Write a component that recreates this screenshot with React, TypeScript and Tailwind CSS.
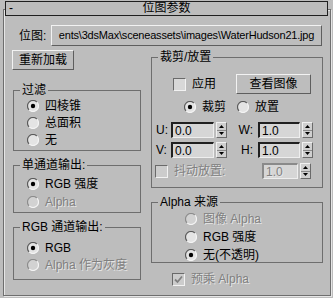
import React from 'react'

const FONT = "font-['Liberation_Sans','Noto_Sans_CJK_SC',sans-serif]"
const DIS = 'text-[#808080] [text-shadow:1px_1px_0_#e6e6e6]'

function Radio({ checked = false, disabled = false }: { checked?: boolean; disabled?: boolean }) {
  return (
    <svg width="12" height="12" viewBox="0 0 12 12" className="shrink-0">
      <circle cx="6" cy="6" r="5.5" fill={disabled ? '#d2d2d2' : '#e4e4e4'} />
      <path d="M2.1 9.9 A5.5 5.5 0 0 1 9.9 2.1" stroke={disabled ? '#8c8c8c' : '#5a5a5a'} strokeWidth="1.2" fill="none" />
      <path d="M9.9 2.1 A5.5 5.5 0 0 1 2.1 9.9" stroke="#f4f4f4" strokeWidth="1.2" fill="none" />
      {checked && <circle cx="6" cy="6" r="2.2" fill="#000" />}
    </svg>
  )
}

function Check({ checked = false, disabled = false }: { checked?: boolean; disabled?: boolean }) {
  return (
    <div className={`w-[13px] h-[13px] shrink-0 border border-t-[#6a6a6a] border-l-[#6a6a6a] border-b-[#f2f2f2] border-r-[#f2f2f2] ${disabled ? 'bg-[#cccccc]' : 'bg-[#d8d8d8]'} flex items-center justify-center`}>
      {checked && (
        <svg width="9" height="9" viewBox="0 0 9 9">
          <path d="M1 4.5 L3.5 7 L8 1.5" stroke={disabled ? '#808080' : '#000'} strokeWidth="1.8" fill="none" />
        </svg>
      )}
    </div>
  )
}

function RadioRow({ label, checked, disabled, className = '' }: { label: string; checked?: boolean; disabled?: boolean; className?: string }) {
  return (
    <div className={`flex items-center gap-[6px] ${className}`}>
      <Radio checked={checked} disabled={disabled} />
      <span className={`leading-[14px] whitespace-nowrap ${disabled ? DIS : ''}`}>{label}</span>
    </div>
  )
}

function Arrows() {
  return (
    <div className="w-[11px] h-[16px] flex flex-col bg-[#cfcfcf] border border-t-[#f0f0f0] border-l-[#f0f0f0] border-b-[#6a6a6a] border-r-[#6a6a6a]">
      <div className="flex-1 flex items-center justify-center border-b border-[#8a8a8a]">
        <svg width="5" height="3" viewBox="0 0 5 3"><path d="M2.5 0 L5 3 L0 3 Z" fill="#000" /></svg>
      </div>
      <div className="flex-1 flex items-center justify-center">
        <svg width="5" height="3" viewBox="0 0 5 3"><path d="M0 0 L5 0 L2.5 3 Z" fill="#000" /></svg>
      </div>
    </div>
  )
}

function Spinner({ value, width, disabled = false }: { value: string; width: string; disabled?: boolean }) {
  return (
    <div className="flex items-center gap-[2px]">
      <div className={`${width} h-[16px] flex items-center pl-[2px] bg-[#d6d6d6] border-t-2 border-l-2 border-b border-r ${disabled ? `border-t-[#8a8a8a] border-l-[#8a8a8a] ${DIS}` : 'border-t-[#202020] border-l-[#202020]'} border-b-[#eeeeee] border-r-[#eeeeee] leading-[12px]`}>
        {value}
      </div>
      <Arrows />
    </div>
  )
}

function Group({ title, className = '', children }: { title: string; className?: string; children: React.ReactNode }) {
  return (
    <fieldset className={`border border-[#6e6e6e] ${className}`}>
      <legend className="ml-[6px] px-[2px] leading-[13px] whitespace-nowrap">{title}</legend>
      {children}
    </fieldset>
  )
}

const BTN = 'flex items-center justify-center bg-[#bdbdbd] border border-t-[#f2f2f2] border-l-[#f2f2f2] border-b-[#5e5e5e] border-r-[#5e5e5e]'

export default function App() {
  return (
    <div className={`w-[333px] h-[298px] bg-[#bdbdbd] overflow-hidden text-[12px] text-black ${FONT}`}>
      {/* 标题栏 */}
      <div className="relative z-10 ml-[5px] mt-px w-[323px] h-[15px] border border-[#202020] bg-[#bdbdbd] grid grid-cols-[24px_1fr_24px] items-center leading-[13px]">
        <span className="pl-[3px]">-</span>
        <span className="text-center">位图参数</span>
        <span />
      </div>

      <div className="ml-[3px] -mt-[7px] w-[328px] h-[287px] border border-[#6e6e6e] shadow-[inset_1px_1px_0_#e6e6e6,1px_1px_0_#e6e6e6]">
        {/* 位图 */}
        <div className="flex items-center pl-[15px] pt-[15px]">
          <span className="w-[32px] leading-[14px]">位图:</span>
          <div className={`${BTN} w-[271px] h-[21px] overflow-hidden whitespace-nowrap text-[11px] tracking-[-0.2px]`}>
            ents\3dsMax\sceneassets\images\WaterHudson21.jpg
          </div>
        </div>

        <div className="flex mt-[4px] pl-[8px]">
          {/* 左列 */}
          <div className="w-[139px] flex flex-col">
            <div className={`${BTN} w-[62px] h-[20px]`}>重新加载</div>

            <Group title="过滤" className="ml-px mt-[14px] w-[128px] h-[67px]">
              <div className="flex flex-col pl-[13px]">
                <RadioRow label="四棱锥" checked className="h-[17px]" />
                <RadioRow label="总面积" className="h-[17px]" />
                <RadioRow label="无" className="h-[17px]" />
              </div>
            </Group>

            <Group title="单通道输出:" className="ml-px mt-[8px] w-[128px] h-[54px]">
              <div className="flex flex-col pl-[13px] pt-[3px]">
                <RadioRow label="RGB 强度" checked className="h-[18px]" />
                <RadioRow label="Alpha" disabled className="h-[18px]" />
              </div>
            </Group>

            <Group title="RGB 通道输出:" className="ml-px mt-[8px] w-[128px] h-[59px]">
              <div className="flex flex-col pl-[13px] pt-[5px]">
                <RadioRow label="RGB" checked className="h-[17px]" />
                <RadioRow label="Alpha 作为灰度" disabled className="h-[17px]" />
              </div>
            </Group>
          </div>

          {/* 右列 */}
          <div className="w-[172px] flex flex-col">
            <Group title="裁剪/放置" className="mt-px w-[172px] h-[137px]">
              <div className="flex items-center h-[20px] mt-[10px] pl-[21px]">
                <Check />
                <span className="ml-[6px] leading-[14px]">应用</span>
                <div className={`${BTN} ml-[20px] w-[75px] h-[20px]`}>查看图像</div>
              </div>

              <div className="flex items-center h-[14px] mt-[6px] pl-[32px]">
                <RadioRow label="裁剪" checked />
                <RadioRow label="放置" className="ml-[11px]" />
              </div>

              <div className="flex flex-col gap-[4px] mt-[8px]">
                {[['U:', 'W:'], ['V:', 'H:']].map(([a, b]) => (
                  <div key={a} className="flex items-center h-[16px] pl-[4px]">
                    <span className="w-[15px]">{a}</span>
                    <Spinner value="0.0" width="w-[43px]" />
                    <span className="w-[31px] text-right pr-[5px]">{b}</span>
                    <Spinner value="1.0" width="w-[42px]" />
                  </div>
                ))}
              </div>

              <div className="flex items-center h-[16px] mt-[5px] pl-[3px]">
                <Check disabled />
                <span className={`ml-[6px] w-[88px] leading-[14px] ${DIS}`}>抖动放置:</span>
                <Spinner value="1.0" width="w-[36px]" disabled />
              </div>
            </Group>

            <Group title="Alpha 来源" className="mt-[8px] w-[172px] h-[67px]">
              <div className="flex flex-col gap-[4px] mt-[3px] pl-[33px]">
                <RadioRow label="图像 Alpha" disabled className="h-[14px]" />
                <RadioRow label="RGB 强度" className="h-[14px]" />
                <RadioRow label="无(不透明)" checked className="h-[14px]" />
              </div>
            </Group>

            <div className="flex items-center mt-[9px] pl-[21px]">
              <Check checked disabled />
              <span className={`ml-[6px] leading-[14px] ${DIS}`}>预乘 Alpha</span>
            </div>
          </div>
        </div>
      </div>
    </div>
  )
}
